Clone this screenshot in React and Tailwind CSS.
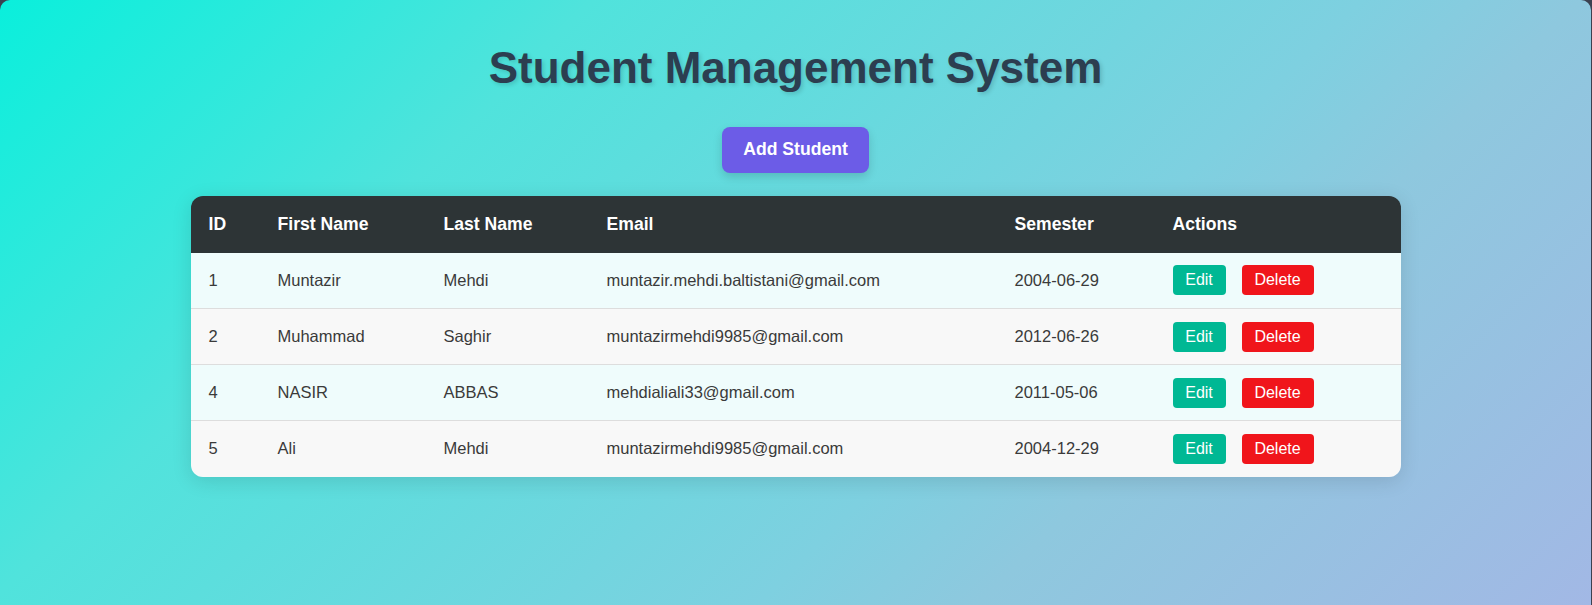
import React from "react";

const students = [
  { id: 1, first: "Muntazir", last: "Mehdi", email: "muntazir.mehdi.baltistani@gmail.com", sem: "2004-06-29" },
  { id: 2, first: "Muhammad", last: "Saghir", email: "muntazirmehdi9985@gmail.com", sem: "2012-06-26" },
  { id: 4, first: "NASIR", last: "ABBAS", email: "mehdialiali33@gmail.com", sem: "2011-05-06" },
  { id: 5, first: "Ali", last: "Mehdi", email: "muntazirmehdi9985@gmail.com", sem: "2004-12-29" },
];

export default function App() {
  return (
    <div className="bg-[#3b4150] pr-px min-h-[605px] flex" style={{ fontFamily: '"Liberation Sans", Arial, sans-serif' }}>
      <div className="flex-1 min-h-[605px] rounded-t-[10px] bg-[linear-gradient(135deg,#0aefdc_0%,#50e3dc_27%,#7ed0e0_62%,#8ec8de_72%,#a2b8e5_100%)] flex flex-col items-center pt-[43px]">
        <h1 className="text-[44px] leading-[50.6px] font-bold text-[#2c3e50] [text-shadow:2px_2px_4px_rgba(0,0,0,0.15)]">
          Student Management System
        </h1>
        <button className="mt-[33px] h-[46px] px-[21.5px] rounded-[8px] bg-[#6c5ce7] text-white font-bold text-[17.6px] shadow-[0_4px_10px_rgba(0,0,0,0.15)]">
          Add Student
        </button>
        <div className="mt-[23px] w-[1210px] rounded-[12px] overflow-hidden shadow-[0_4px_20px_rgba(0,0,0,0.12)]">
          <table className="w-full table-fixed border-collapse">
            <colgroup>
              <col className="w-[69px]" />
              <col className="w-[166px]" />
              <col className="w-[163px]" />
              <col className="w-[408px]" />
              <col className="w-[158px]" />
              <col className="w-[246px]" />
            </colgroup>
            <thead>
              <tr className="bg-[#2d3436] text-white h-[57px]">
                {["ID", "First Name", "Last Name", "Email", "Semester", "Actions"].map((h) => (
                  <th key={h} className="text-left font-bold text-[17.6px] pl-[18px] pr-2">
                    {h}
                  </th>
                ))}
              </tr>
            </thead>
            <tbody>
              {students.map((s, i) => (
                <tr
                  key={i}
                  className={`h-[56px] text-[16.5px] text-[#3a3a3a] ${i % 2 === 0 ? "bg-[#effcfc]" : "bg-[#f8f8f8]"} ${i < students.length - 1 ? "border-b border-[#dddddd]" : ""}`}
                >
                  <td className="pl-[18px]">{s.id}</td>
                  <td className="pl-[18px]">{s.first}</td>
                  <td className="pl-[18px]">{s.last}</td>
                  <td className="pl-[18px] whitespace-nowrap">{s.email}</td>
                  <td className="pl-[18px]">{s.sem}</td>
                  <td className="pl-[18px]">
                    <div className="flex gap-[16px]">
                      <button className="h-[30px] w-[53px] rounded-[4px] bg-[#00b894] text-white text-[16px]">Edit</button>
                      <button className="h-[30px] w-[72px] rounded-[4px] bg-[#f0151b] text-white text-[16px]">Delete</button>
                    </div>
                  </td>
                </tr>
              ))}
            </tbody>
          </table>
        </div>
      </div>
    </div>
  );
}
